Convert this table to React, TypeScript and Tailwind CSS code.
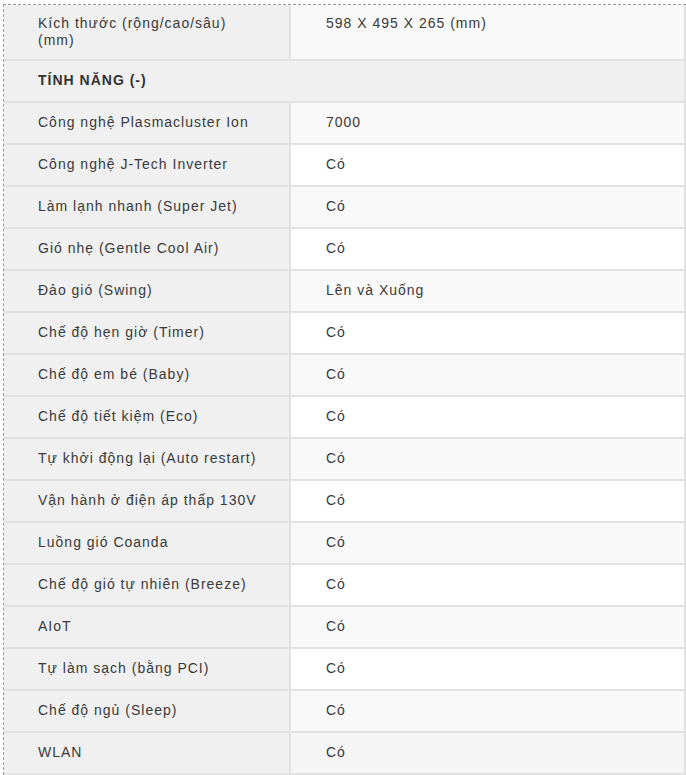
const rows: [string, string][] = [
    ['Công nghệ Plasmacluster Ion', '7000'],
    ['Công nghệ J-Tech Inverter', 'Có'],
    ['Làm lạnh nhanh (Super Jet)', 'Có'],
    ['Gió nhẹ (Gentle Cool Air)', 'Có'],
    ['Đảo gió (Swing)', 'Lên và Xuống'],
    ['Chế độ hẹn giờ (Timer)', 'Có'],
    ['Chế độ em bé (Baby)', 'Có'],
    ['Chế độ tiết kiệm (Eco)', 'Có'],
    ['Tự khởi động lại (Auto restart)', 'Có'],
    ['Vận hành ở điện áp thấp 130V', 'Có'],
    ['Luồng gió Coanda', 'Có'],
    ['Chế độ gió tự nhiên (Breeze)', 'Có'],
    ['AIoT', 'Có'],
    ['Tự làm sạch (bằng PCI)', 'Có'],
    ['Chế độ ngủ (Sleep)', 'Có'],
    ['WLAN', 'Có'],
];

export default function App() {
    return (
        <div className="bg-white w-[686px] h-[775px] overflow-hidden pl-[3px] pt-[4px] text-[14px] leading-[17px] text-[#3a3a3a] tracking-[1px] font-['Liberation_Sans',Arial,sans-serif]">
            <div className="border-t border-l border-dashed border-[#999] w-[683px]">
                <div className="border-r-2 border-[#e2e2e2] w-[682px]">
                    {/* size row */}
                    <div className="flex h-[56px] border-b-2 border-[#e2e2e2]">
                        <div className="w-[287px] shrink-0 bg-[#f0f0f0] border-r-2 border-[#e2e2e2] pl-[34px] pt-[10px] pr-[30px]">
                            Kích thước (rộng/cao/sâu) (mm)
                        </div>
                        <div className="flex-1 bg-[#f9f9f9] pl-[35px] pt-[10px]">598 X 495 X 265 (mm)</div>
                    </div>

                    {/* section header */}
                    <div className="h-[42px] border-b-2 border-[#e2e2e2] bg-[#f0f0f0] pl-[34px] pt-[11px] font-bold text-[#333]">
                        TÍNH NĂNG (-)
                    </div>

                    {rows.map(([label, value], i) => (
                        <div key={label} className="flex h-[42px] border-b-2 border-[#e2e2e2]">
                            <div className="w-[287px] shrink-0 bg-[#f0f0f0] border-r-2 border-[#e2e2e2] pl-[34px] pt-[11px]">
                                {label}
                            </div>
                            <div className={`flex-1 pl-[35px] pt-[11px] ${i === rows.length - 1 ? 'bg-[#f5f5f5]' : i % 2 === 0 ? 'bg-[#f9f9f9]' : 'bg-white'}`}>
                                {value}
                            </div>
                        </div>
                    ))}
                </div>
            </div>
        </div>
    );
}
